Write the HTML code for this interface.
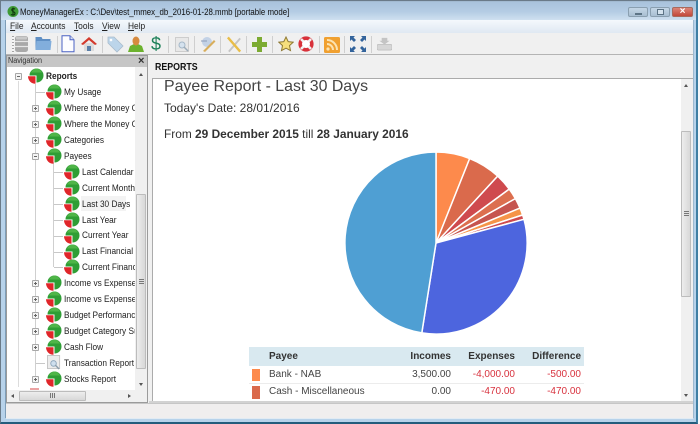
<!DOCTYPE html>
<html><head><meta charset="utf-8">
<style>
html,body{margin:0;padding:0;width:700px;height:424px;overflow:hidden;background:#f4f7fa}
*{box-sizing:border-box}
body{position:relative;font-family:"Liberation Sans",sans-serif;color:#222}
div,span,svg{position:absolute}
.t{white-space:nowrap;font-size:9px;line-height:12px;color:#222;height:12px;overflow:hidden;transform:scaleX(.92);transform-origin:0 0}
.m{white-space:nowrap;font-size:9.2px;line-height:13px;color:#222;top:20px;transform:scaleX(.91);transform-origin:0 0}
.m u{text-decoration:underline}
.sep{top:36px;width:1px;height:17px;background:#cfcfcf}
.h{width:9px;height:1px;background:#c8c8c8}
.b{left:32px;width:7px;height:7px;border:1px solid #a8a8a8;border-radius:1px;background:#f4f4f4}
.d{left:34px;width:3px;height:1px;background:#666}
.v{left:35px;width:1px;height:3px;background:#666}
.c{white-space:nowrap;font-size:10px;line-height:14px}
.r{text-align:right}
.red{color:#d8333f}
</style></head><body>
<svg width="0" height="0" style="left:0;top:0"><defs>
<g id="pie"><path d="M10.500 8.500L3.500 8.500A7 7 0 1 1 10.500 15.500Z" fill="#2f9e35"/><path d="M5 5.500A7 7 0 0 1 10.500 1.500A7 7 0 0 1 16 5.500Z" fill="#4fb548"/><path d="M9.500 9.300L9.500 16.800A7.500 7.500 0 0 1 2 9.300Z" fill="#e0262a"/></g>
</defs></svg>

<div style="left:0;top:0;width:700px;height:424px;filter:blur(.35px)">

<!-- window frame -->
<div style="left:0;top:0;width:698px;height:424px;background:#b7d2ea"></div>
<div style="left:0;top:0;width:698px;height:20px;background:linear-gradient(#8f9fb0 0,#a9c3dc 2px,#b5cde4 12px,#cfe0f0 20px)"></div>
<div style="left:0;top:0;width:698px;height:424px;border:1px solid #6a7a88;border-bottom:2px solid #235c7c;border-right:2px solid #3f7fa4"></div>
<div style="left:5px;top:20px;width:1px;height:398px;background:#7d9db8"></div>
<div style="left:693px;top:20px;width:1px;height:398px;background:#9db9d0"></div>

<!-- title -->
<svg style="left:7px;top:5px" width="12" height="13" viewBox="0 0 12 13"><circle cx="6" cy="6.500" r="5.500" fill="#3f9a36"/><path d="M8 4.200C6.500 3 4 3.800 5 5.500s3 1.200 3 3-3 2-4 .8M6 2.500v8" stroke="#10380f" stroke-width="1.100" fill="none"/></svg>
<div style="left:20px;top:6px;white-space:nowrap;font-size:9.600px;line-height:13px;color:#111;transform:scaleX(.82);transform-origin:0 0">MoneyManagerEx : C:\Dev\test_mmex_db_2016-01-28.mmb [portable mode]</div>
<div style="left:628px;top:7px;width:20px;height:10px;background:linear-gradient(#c4d6e6,#a9bfd2);border:1px solid #8a9fb0;border-radius:2px"></div>
<div style="left:635px;top:13px;width:7px;height:2px;background:#5d7486"></div>
<div style="left:650px;top:7px;width:20px;height:10px;background:linear-gradient(#c4d6e6,#a9bfd2);border:1px solid #8a9fb0;border-radius:2px"></div>
<div style="left:657px;top:9px;width:7px;height:6px;border:1.500px solid #5d7486;background:#d5e3ee"></div>
<div style="left:672px;top:7px;width:21px;height:10px;background:linear-gradient(#dc8478,#c2483a);border:1px solid #a86a5d;border-radius:2px"></div>
<div style="left:672px;top:6px;width:21px;height:11px;font-size:10px;line-height:11px;text-align:center;font-weight:bold;color:#fff">×</div>

<!-- menu -->
<div style="left:6px;top:20px;width:687px;height:13px;background:linear-gradient(#f4f8fc,#dfe8f2)"></div>
<div class="m" style="left:10px"><u>F</u>ile</div>
<div class="m" style="left:31px"><u>A</u>ccounts</div>
<div class="m" style="left:74px"><u>T</u>ools</div>
<div class="m" style="left:102px"><u>V</u>iew</div>
<div class="m" style="left:128px"><u>H</u>elp</div>

<!-- toolbar -->
<div style="left:6px;top:33px;width:687px;height:22px;background:#f0f0f0;border-bottom:1px solid #b4b4b4"></div>
<div style="left:12px;top:36px;width:2px;height:17px;background:repeating-linear-gradient(#a5a5a5 0 1px,#f5f5f5 1px 3px)"></div>
<svg style="left:15px;top:36px" width="13" height="16" viewBox="0 0 13 16"><rect x="0" y="0" width="13" height="16" rx="2.500" fill="#a9a9a9"/><path d="M0 5.500h13M0 10.500h13" stroke="#e6e6e6" stroke-width="1.200"/><rect x="1" y=".5" width="11" height="3" rx="1" fill="#c9c9c9"/></svg>
<svg style="left:35px;top:37px" width="17" height="14" viewBox="0 0 16 14"><path d="M0 0h6l1 2h8v11H0z" fill="#5f8fc4"/><path d="M1 4h15l-1 9H0z" fill="#82aedc"/></svg>
<div class="sep" style="left:57px"></div>
<svg style="left:61px;top:35px" width="14" height="18" viewBox="0 0 14 18"><path d="M1 .8h8l4 4v12H1z" fill="#fdfdff" stroke="#4a62c4"/><path d="M9 .8v4h4" fill="#d8e0f5" stroke="#4a62c4"/></svg>
<svg style="left:81px;top:36px" width="16" height="16" viewBox="0 0 16 16"><path d="M3 7h10v8H3z" fill="#dcdcdc"/><path d="M0 8L8 1l8 7-2 1-6-5-6 5z" fill="#d33a2c"/><rect x="6" y="10" width="4" height="5" fill="#5a7fa8"/></svg>
<div class="sep" style="left:102px"></div>
<svg style="left:107px;top:36px" width="17" height="17" viewBox="0 0 17 17"><path d="M1 1h6l9 9-6 6-9-9z" fill="#bcd5ea" stroke="#a9bccc" stroke-width=".8"/><circle cx="4" cy="4" r="1.300" fill="#fff"/></svg>
<svg style="left:128px;top:36px" width="16" height="16" viewBox="0 0 16 16"><path d="M0 16l2-6 4-2h4l4 2 2 6z" fill="#6cb22e"/><ellipse cx="8" cy="5" rx="3.500" ry="4.500" fill="#d68a3e"/></svg>
<div style="left:149px;top:34px;width:14px;text-align:center;font-size:18px;line-height:20px;color:#1c8058">$</div>
<div class="sep" style="left:168px"></div>
<svg style="left:175px;top:37px" width="15" height="16" viewBox="0 0 15 16"><rect x=".5" y=".5" width="13" height="14" fill="#e8e8e8" stroke="#cdcdcd"/><circle cx="7" cy="8" r="3" fill="#d5e2ee" stroke="#a5b8c8"/><path d="M9 10l4 4" stroke="#9cacb9" stroke-width="1.500"/></svg>
<div class="sep" style="left:194px"></div>
<svg style="left:200px;top:36px" width="16" height="17" viewBox="0 0 16 17"><circle cx="7" cy="6" r="5" fill="#c3d2e6"/><path d="M3 15L14 4l1.500 1.500L5 16z" fill="#d8ae5c"/><path d="M1 5h6" stroke="#8c9cb8"/></svg>
<div class="sep" style="left:220px"></div>
<svg style="left:226px;top:36px" width="17" height="17" viewBox="0 0 18 17"><path d="M3 16L15 2" stroke="#c4c4c4" stroke-width="2"/><path d="M2 1l13 15" stroke="#e8bd48" stroke-width="2.500"/></svg>
<div class="sep" style="left:246px"></div>
<svg style="left:252px;top:37px" width="15" height="15" viewBox="0 0 15 15"><path d="M5 0h5v5h5v5h-5v5H5v-5H0V5h5z" fill="#7cab32"/></svg>
<div class="sep" style="left:272px"></div>
<svg style="left:278px;top:36px" width="16" height="16" viewBox="0 0 16 16"><path d="M8 1l2.200 4.600 5 .6-3.700 3.400 1 5L8 12.200 3.500 14.600l1-5L.8 6.200l5-.6z" fill="#f6df7c" stroke="#8f7a35"/></svg>
<svg style="left:298px;top:36px" width="16" height="16" viewBox="0 0 16 16"><circle cx="8" cy="8" r="5.800" fill="#fff" stroke="#d8313a" stroke-width="3.600"/><path d="M3 3L5.500 5.500M13 3L10.500 5.500M3 13L5.500 10.500M13 13L10.500 10.500" stroke="#f0f0f0" stroke-width="2.600"/></svg>
<div class="sep" style="left:319px"></div>
<svg style="left:324px;top:37px" width="16" height="16" viewBox="0 0 16 16"><rect width="16" height="16" rx="1.500" fill="#f0a030"/><path d="M3 3a10 10 0 0 1 10 10M3 7a6 6 0 0 1 6 6" stroke="#fce3b0" stroke-width="2" fill="none"/><circle cx="4" cy="12" r="1.600" fill="#fce3b0"/></svg>
<div class="sep" style="left:344px"></div>
<svg style="left:350px;top:36px" width="16" height="16" viewBox="0 0 16 16"><path d="M0 0h5L3.500 1.500 6 4 4 6 1.500 3.500 0 5zM16 0v5l-1.500-1.500L12 6l-2-2 2.500-2.500L11 0zM0 16v-5l1.500 1.500L4 10l2 2-2.500 2.500L5 16zM16 16h-5l1.500-1.500L10 12l2-2 2.500 2.500L16 11z" fill="#33639b"/></svg>
<div class="sep" style="left:371px"></div>
<svg style="left:377px;top:37px" width="15" height="14" viewBox="0 0 16 15"><rect x="0" y="8" width="16" height="6" rx="1.500" fill="#d6d6d6" stroke="#b5b5b5" stroke-width=".6"/><path d="M5 1h6v3h2.500L8 8 2.500 4H5z" fill="#c4c4c4"/></svg>

<!-- central bg -->
<div style="left:6px;top:55px;width:687px;height:363px;background:#f0f0f0"></div>

<!-- nav panel -->
<div style="left:6px;top:55px;width:142px;height:348px;background:#fff;border:1px solid #9b9b9b"></div>
<div style="left:7px;top:56px;width:140px;height:11px;background:#c6c6c6"></div>
<div style="left:8px;top:55px;font-size:8px;line-height:12px;color:#333;transform:scaleX(.9);transform-origin:0 0">Navigation</div>
<div style="left:138px;top:55px;font-size:11px;line-height:12px;font-weight:bold;color:#333">×</div>

<!-- tree lines -->
<div style="left:18px;top:81px;width:1px;height:306px;background:#dcdcdc"></div>
<div style="left:35px;top:84px;width:1px;height:295px;background:#cfcfcf"></div>
<div style="left:53px;top:162px;width:1px;height:105px;background:#cfcfcf"></div>

<div class="b" style="left:15px;top:73px"></div><div class="d" style="left:17px;top:76px"></div>
<svg style="left:26px;top:67px" width="18" height="17"><use href="#pie"/></svg>
<div class="t" style="left:46px;top:70px;font-weight:bold">Reports</div>

<svg style="left:44px;top:83px" width="18" height="17"><use href="#pie"/></svg>
<div class="t" style="left:64px;top:86px">My Usage</div>
<div class="h" style="left:36px;top:92px"></div>

<div class="b" style="top:105px"></div><div class="d" style="top:108px"></div><div class="v" style="top:107px"></div>
<svg style="left:44px;top:99px" width="18" height="17"><use href="#pie"/></svg>
<div class="t" style="left:64px;top:102px;width:77px">Where the Money Goes</div>

<div class="b" style="top:121px"></div><div class="d" style="top:124px"></div><div class="v" style="top:123px"></div>
<svg style="left:44px;top:115px" width="18" height="17"><use href="#pie"/></svg>
<div class="t" style="left:64px;top:118px;width:77px">Where the Money Comes From</div>

<div class="b" style="top:137px"></div><div class="d" style="top:140px"></div><div class="v" style="top:139px"></div>
<svg style="left:44px;top:131px" width="18" height="17"><use href="#pie"/></svg>
<div class="t" style="left:64px;top:134px">Categories</div>

<div class="b" style="top:153px"></div><div class="d" style="top:156px"></div>
<svg style="left:44px;top:147px" width="18" height="17"><use href="#pie"/></svg>
<div class="t" style="left:64px;top:150px">Payees</div>

<div class="h" style="left:54px;top:172px"></div>
<svg style="left:62px;top:163px" width="18" height="17"><use href="#pie"/></svg>
<div class="t" style="left:82px;top:166px;width:58px">Last Calendar Month</div>
<div class="h" style="left:54px;top:188px"></div>
<svg style="left:62px;top:179px" width="18" height="17"><use href="#pie"/></svg>
<div class="t" style="left:82px;top:182px;width:58px">Current Month</div>
<div style="left:81px;top:196px;width:45px;height:15px;background:#f3f3f3"></div>
<div class="h" style="left:54px;top:204px"></div>
<svg style="left:62px;top:195px" width="18" height="17"><use href="#pie"/></svg>
<div class="t" style="left:82px;top:198px">Last 30 Days</div>
<div class="h" style="left:54px;top:220px"></div>
<svg style="left:62px;top:211px" width="18" height="17"><use href="#pie"/></svg>
<div class="t" style="left:82px;top:214px">Last Year</div>
<div class="h" style="left:54px;top:236px"></div>
<svg style="left:62px;top:227px" width="18" height="17"><use href="#pie"/></svg>
<div class="t" style="left:82px;top:229px">Current Year</div>
<div class="h" style="left:54px;top:252px"></div>
<svg style="left:62px;top:243px" width="18" height="17"><use href="#pie"/></svg>
<div class="t" style="left:82px;top:245px;width:58px">Last Financial Year</div>
<div class="h" style="left:54px;top:267px"></div>
<svg style="left:62px;top:258px" width="18" height="17"><use href="#pie"/></svg>
<div class="t" style="left:82px;top:261px;width:58px">Current Financial Year</div>

<div class="b" style="top:280px"></div><div class="d" style="top:283px"></div><div class="v" style="top:282px"></div>
<svg style="left:44px;top:274px" width="18" height="17"><use href="#pie"/></svg>
<div class="t" style="left:64px;top:277px;width:77px">Income vs Expenses - Summary</div>
<div class="b" style="top:296px"></div><div class="d" style="top:299px"></div><div class="v" style="top:298px"></div>
<svg style="left:44px;top:290px" width="18" height="17"><use href="#pie"/></svg>
<div class="t" style="left:64px;top:293px;width:77px">Income vs Expenses - Monthly</div>
<div class="b" style="top:312px"></div><div class="d" style="top:315px"></div><div class="v" style="top:314px"></div>
<svg style="left:44px;top:306px" width="18" height="17"><use href="#pie"/></svg>
<div class="t" style="left:64px;top:309px;width:77px">Budget Performance</div>
<div class="b" style="top:328px"></div><div class="d" style="top:331px"></div><div class="v" style="top:330px"></div>
<svg style="left:44px;top:322px" width="18" height="17"><use href="#pie"/></svg>
<div class="t" style="left:64px;top:325px;width:77px">Budget Category Summary</div>
<div class="b" style="top:344px"></div><div class="d" style="top:347px"></div><div class="v" style="top:346px"></div>
<svg style="left:44px;top:338px" width="18" height="17"><use href="#pie"/></svg>
<div class="t" style="left:64px;top:341px">Cash Flow</div>
<div class="h" style="left:36px;top:363px"></div>
<svg style="left:47px;top:355px" width="14" height="15" viewBox="0 0 15 16"><rect x=".5" y=".5" width="13" height="14" fill="#ececec" stroke="#c4c4c4"/><circle cx="7" cy="9" r="3" fill="#cfdfee" stroke="#90a8bd"/><path d="M9 11l4 4" stroke="#8a9cab" stroke-width="1.500"/></svg>
<div class="t" style="left:64px;top:357px">Transaction Report</div>
<div class="b" style="top:376px"></div><div class="d" style="top:379px"></div><div class="v" style="top:378px"></div>
<svg style="left:44px;top:370px" width="18" height="17"><use href="#pie"/></svg>
<div class="t" style="left:64px;top:373px">Stocks Report</div>
<div style="left:30px;top:388px;width:9px;height:2px;background:#eba3a3"></div>

<!-- nav scrollbars -->
<div style="left:135px;top:67px;width:12px;height:323px;background:#f0f0f0"></div>
<div style="left:139px;top:73px;width:0;height:0;border-left:2.500px solid transparent;border-right:2.500px solid transparent;border-bottom:3px solid #555"></div>
<div style="left:136px;top:194px;width:10px;height:175px;background:linear-gradient(90deg,#ededed,#d8d8d8);border:1px solid #bcbcbc;border-radius:1px"></div>
<div style="left:139px;top:279px;width:5px;height:5px;background:repeating-linear-gradient(#777 0 1px,#e0e0e0 1px 2px)"></div>
<div style="left:139px;top:383px;width:0;height:0;border-left:2.500px solid transparent;border-right:2.500px solid transparent;border-top:3px solid #555"></div>
<div style="left:7px;top:390px;width:140px;height:12px;background:#f0f0f0"></div>
<div style="left:19px;top:391px;width:67px;height:10px;background:linear-gradient(#ededed,#d8d8d8);border:1px solid #bcbcbc;border-radius:1px"></div>
<div style="left:50px;top:393px;width:5px;height:5px;background:repeating-linear-gradient(90deg,#777 0 1px,#e0e0e0 1px 2px)"></div>
<div style="left:11px;top:394px;width:0;height:0;border-top:2.500px solid transparent;border-bottom:2.500px solid transparent;border-right:3px solid #555"></div>
<div style="left:128px;top:394px;width:0;height:0;border-top:2.500px solid transparent;border-bottom:2.500px solid transparent;border-left:3px solid #555"></div>

<!-- reports panel -->
<div style="left:155px;top:60px;font-size:10.500px;line-height:14px;font-weight:bold;color:#111;transform:scaleX(.84);transform-origin:0 0">REPORTS</div>
<div style="left:152px;top:78px;width:541px;height:323px;background:#fff;border-top:1px solid #ababab;border-left:1px solid #ababab"></div>
<div style="left:164px;top:77px;white-space:nowrap;font-size:15.900px;line-height:20px;color:#444">Payee Report - Last 30 Days</div>
<div style="left:164px;top:101px;white-space:nowrap;font-size:12px;line-height:14px;color:#333">Today's Date: 28/01/2016</div>
<div style="left:164px;top:127px;white-space:nowrap;font-size:11.900px;line-height:14px;color:#333">From <b>29 December 2015</b> till <b>28 January 2016</b></div>

<!-- pie -->
<svg style="left:340px;top:145px" width="192" height="200" viewBox="340 145 192 200">
<g stroke="#fff" stroke-width="1.500">
<path d="M436 243L436 152A91 91 0 0 1 469.700 158.500Z" fill="#fd8a4c"/>
<path d="M436 243L469.700 158.500A91 91 0 0 1 497.700 176.100Z" fill="#da6a4c"/>
<path d="M436 243L497.700 176.100A91 91 0 0 1 509.200 189.100Z" fill="#cf4a4e"/>
<path d="M436 243L509.200 189.100A91 91 0 0 1 515.400 198.600Z" fill="#dc6f4f"/>
<path d="M436 243L515.400 198.600A91 91 0 0 1 520 208.100Z" fill="#c6554f"/>
<path d="M436 243L520 208.100A91 91 0 0 1 522.600 215Z" fill="#f59448"/>
<path d="M436 243L522.600 215A91 91 0 0 1 524 219.300Z" fill="#cf4a4e"/>
<path d="M436 243L524 219.300A91 91 0 0 1 421.800 332.900Z" fill="#4d65de"/>
<path d="M436 243L421.800 332.900A91 91 0 0 1 436 152Z" fill="#4f9fd3"/>
</g></svg>

<!-- table -->
<div style="left:249px;top:347px;width:335px;height:19px;background:#d9e9f0"></div>
<div class="c" style="left:269px;top:350px;font-weight:bold;color:#333">Payee</div>
<div class="c r" style="left:390px;width:61px;top:350px;font-weight:bold;color:#333">Incomes</div>
<div class="c r" style="left:454px;width:61px;top:350px;font-weight:bold;color:#333">Expenses</div>
<div class="c r" style="left:520px;width:61px;top:350px;font-weight:bold;color:#333">Difference</div>
<div style="left:249px;top:383px;width:335px;height:1px;background:#ececec"></div>
<div style="left:252px;top:369px;width:8px;height:12px;background:#fd8a4c"></div>
<div class="c" style="left:269px;top:368px;color:#444">Bank - NAB</div>
<div class="c r" style="left:390px;width:61px;top:368px;color:#444">3,500.00</div>
<div class="c r red" style="left:454px;width:61px;top:368px">-4,000.00</div>
<div class="c r red" style="left:520px;width:61px;top:368px">-500.00</div>
<div style="left:252px;top:386px;width:8px;height:13px;background:#da6a4c"></div>
<div class="c" style="left:269px;top:385px;color:#444">Cash - Miscellaneous</div>
<div class="c r" style="left:390px;width:61px;top:385px;color:#444">0.00</div>
<div class="c r red" style="left:454px;width:61px;top:385px">-470.00</div>
<div class="c r red" style="left:520px;width:61px;top:385px">-470.00</div>

<!-- content scrollbar -->
<div style="left:681px;top:79px;width:12px;height:322px;background:#f0f0f0"></div>
<div style="left:684px;top:84px;width:0;height:0;border-left:2.500px solid transparent;border-right:2.500px solid transparent;border-bottom:3px solid #555"></div>
<div style="left:681px;top:131px;width:10px;height:166px;background:linear-gradient(90deg,#ededed,#d8d8d8);border:1px solid #bcbcbc;border-radius:1px"></div>
<div style="left:684px;top:211px;width:5px;height:5px;background:repeating-linear-gradient(#777 0 1px,#e0e0e0 1px 2px)"></div>
<div style="left:684px;top:394px;width:0;height:0;border-left:2.500px solid transparent;border-right:2.500px solid transparent;border-top:3px solid #555"></div>

<!-- status -->
<div style="left:149px;top:401px;width:544px;height:2px;background:#d2d2d2"></div>
<div style="left:6px;top:403px;width:687px;height:1px;background:#c6c6c6"></div>
<div style="left:6px;top:404px;width:687px;height:14px;background:#f0eeee"></div>
<div style="left:6px;top:418px;width:687px;height:1px;background:#e2ebf3"></div>

</div>
</body></html>
